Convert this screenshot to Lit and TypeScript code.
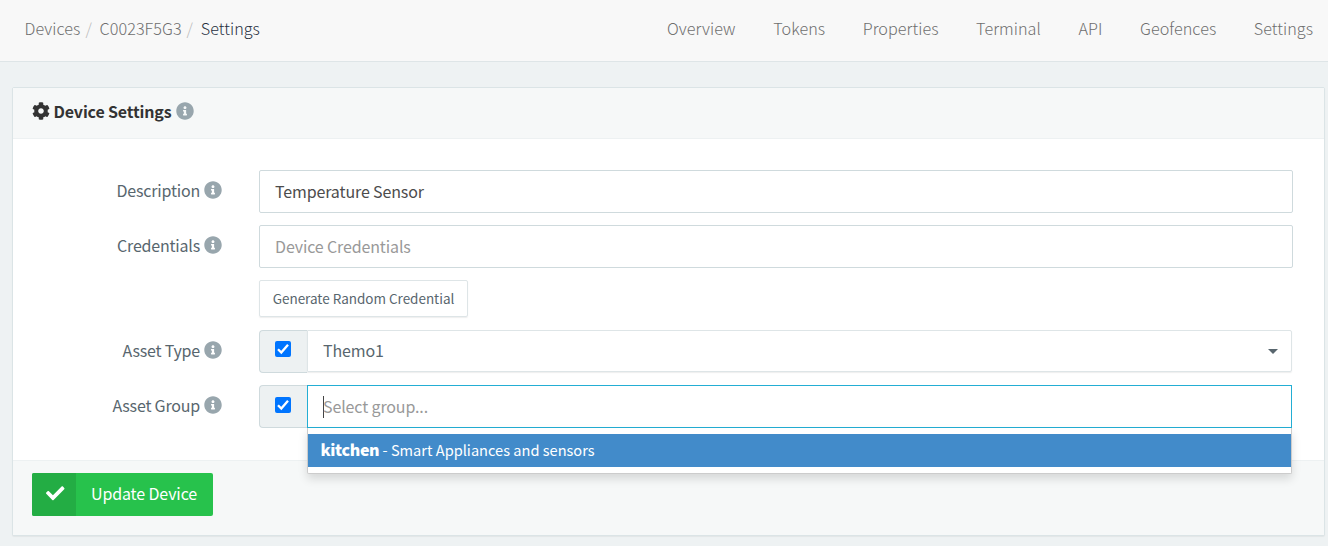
import { LitElement, html, css, svg } from "lit";
import { customElement } from "lit/decorators.js";

const ICONS: Record<string, string> = {
  cog: "M487.4 315.7l-42.6-24.6c4.3-23.2 4.3-47 0-70.2l42.6-24.6c4.9-2.8 7.1-8.6 5.5-14-11.1-35.6-30-67.8-54.7-94.6-3.8-4.1-10-5.1-14.8-2.3L380.8 110c-17.900-15.400-38.500-27.300-60.800-35.100V25.800c0-5.600-3.900-10.500-9.400-11.700-36.700-8.200-74.300-7.800-109.200 0-5.500 1.200-9.400 6.100-9.400 11.700V75c-22.200 7.900-42.800 19.800-60.800 35.100L88.700 85.500c-4.900-2.800-11-1.900-14.8 2.300-24.700 26.700-43.600 58.900-54.700 94.600-1.700 5.400.6 11.200 5.500 14L67.300 221c-4.300 23.200-4.300 47 0 70.200l-42.600 24.600c-4.900 2.800-7.100 8.600-5.500 14 11.100 35.600 30 67.800 54.700 94.600 3.800 4.100 10 5.100 14.800 2.300l42.600-24.600c17.900 15.400 38.500 27.300 60.800 35.100v49.200c0 5.600 3.900 10.500 9.400 11.700 36.700 8.200 74.300 7.800 109.200 0 5.500-1.200 9.400-6.100 9.400-11.700v-49.200c22.200-7.900 42.800-19.800 60.800-35.100l42.600 24.600c4.900 2.800 11 1.900 14.800-2.300 24.700-26.700 43.600-58.900 54.700-94.600 1.500-5.500-.7-11.300-5.600-14.100zM256 336c-44.100 0-80-35.900-80-80s35.900-80 80-80 80 35.900 80 80-35.900 80-80 80z",
  info: "M256 8C119.043 8 8 119.083 8 256c0 136.997 111.043 248 248 248s248-111.003 248-248C504 119.083 392.957 8 256 8zm0 110c23.196 0 42 18.804 42 42s-18.804 42-42 42-42-18.804-42-42 18.804-42 42-42zm56 254c0 6.627-5.373 12-12 12h-88c-6.627 0-12-5.373-12-12v-24c0-6.627 5.373-12 12-12h12v-64h-12c-6.627 0-12-5.373-12-12v-24c0-6.627 5.373-12 12-12h64c6.627 0 12 5.373 12 12v100h12c6.627 0 12 5.373 12 12v24z",
  check: "M173.898 439.404l-166.400-166.400c-9.997-9.997-9.997-26.206 0-36.204l36.203-36.204c9.997-9.998 26.207-9.998 36.204 0L192 312.690 432.095 72.596c9.997-9.997 26.207-9.997 36.204 0l36.203 36.204c9.997 9.997 9.997 26.206 0 36.204l-294.400 294.401c-9.998 9.997-26.207 9.997-36.204-.001z",
};

const icon = (name: string) =>
  html`<svg class="icon ${name}" viewBox="0 0 512 512">${svg`<path d=${ICONS[name]} />`}</svg>`;

const NAV = ["Overview", "Tokens", "Properties", "Terminal", "API", "Geofences", "Settings"];

@customElement("app-root")
export class AppRoot extends LitElement {
  static styles = css`
    :host {
      display: block;
      height: 546px;
      overflow: hidden;
      background: #eef2f3;
      color: #58666e;
      font: 400 16px/24px "Noto Sans CJK SC", "Noto Sans", sans-serif;
      letter-spacing: -0.13px;
    }
    * { box-sizing: border-box; }
    .icon { display: block; fill: currentColor; flex: none; }
    header {
      display: flex;
      justify-content: space-between;
      height: 62px;
      padding: 16px 15px 0 24.5px;
      background: #f8f8f8;
      border-bottom: 1px solid #dee5e7;
      color: #6e6e6e;
      font-size: 16.2px;
      font-weight: 300;
      letter-spacing: 0.04px;
    }
    .crumbs { display: flex; }
    .slash { color: #bbb; padding: 0 7.8px 0 5px; }
    .current { color: #262f40; }
    nav { display: flex; gap: 37.6px; }
    .panel {
      width: 1313px;
      height: 449px;
      margin: 25px 0 0 12px;
      background: #fff;
      border: 1px solid #dbe4e6;
      border-radius: 2px;
      box-shadow: 0 1px 1px rgba(0, 0, 0, 0.05);
      display: flex;
      flex-direction: column;
    }
    .heading {
      display: flex;
      align-items: flex-start;
      height: 51px;
      padding: 11px 0 0 19px;
      background: #f6f8f8;
      border-bottom: 1px solid #edf1f2;
      color: #333;
      font-weight: 700;
      letter-spacing: -0.16px;
    }
    .heading .icon { margin-top: 3px; }
    .cog { width: 18px; height: 18px; margin-right: 3.5px; }
    .info { width: 18px; height: 18px; margin-left: 4px; color: #98a6ad; }
    .form {
      flex: 1;
      padding: 31px 31px 0 0;
      display: flex;
      flex-direction: column;
      gap: 12px;
    }
    .row { display: grid; grid-template-columns: 209px 1fr; column-gap: 37px; }
    .label { display: flex; justify-content: flex-end; height: 42px; padding-top: 8px; letter-spacing: -0.2px; }
    .label .info { margin-top: 3px; }
    .field {
      height: 43px;
      padding: 8px 15px;
      border: 1px solid #cfdadd;
      border-radius: 2px;
      color: #4c4c4c;
    }
    .field.muted, .muted { color: #999; }
    .generate {
      justify-self: start;
      grid-column: 2;
      height: 37px;
      width: 209px;
      margin-bottom: 1px;
      font-size: 13.5px;
      letter-spacing: -0.02px;
      text-align: center;
      padding-top: 5px;
      border: 1px solid #dee5e7;
      border-radius: 2px;
      box-shadow: 0 1px 1px rgba(90, 90, 90, 0.1);
    }
    .group { display: flex; height: 43px; padding-right: 1px; position: relative; }
    .addon {
      width: 48px;
      padding: 10px 0 0 15px;
      background: #edf1f2;
      border: 1px solid #cfdadd;
      border-right: 0;
      border-radius: 4px 0 0 4px;
    }
    .low { padding-top: 11px; }
    .box { display: block; width: 16px; height: 16px; }
    .select {
      flex: 1;
      display: flex;
      justify-content: space-between;
      height: 42px;
      padding: 7px 13px 0 15px;
      border: 1px solid #dee5e7;
      border-radius: 0 2px 2px 0;
      box-shadow: 0 1px 1px rgba(90, 90, 90, 0.1);
    }
    .caret {
      margin-top: 11px;
      width: 10px;
      height: 5px;
      background: #58666e;
      clip-path: polygon(0 0, 100% 0, 50% 100%);
    }
    .active { flex: 1; display: flex; height: 43px; padding: 8px 15px; border: 1px solid #23aed4; background: #fff; }
    .cursor { width: 1px; height: 22px; margin: 2px -1px 0 0; background: #444; }
    .menu {
      position: absolute;
      top: 43px;
      left: 48px;
      right: 1px;
      height: 46px;
      padding: 6px 0;
      background: #fff;
      border: 1px solid #ccc;
      border-top: 0;
      border-radius: 0 0 2px 2px;
      box-shadow: 0 5px 10px rgba(0, 0, 0, 0.13);
    }
    .option {
      height: 33px;
      padding: 3px 12.5px;
      background: #428bca;
      color: #fff;
      font-size: 14.6px;
      letter-spacing: 0;
      white-space: pre;
    }
    .option b { font-size: 16px; font-weight: 900; letter-spacing: -0.35px; }
    .footer { height: 75px; padding: 12px 19px; background: #f6f8f8; border-top: 1px solid #edf1f2; }
    .update {
      display: flex;
      width: 181px;
      height: 43px;
      border-radius: 2px;
      overflow: hidden;
      background: #27c24c;
      color: #fff;
    }
    .mark { width: 44px; background: #23ad44; padding: 11px 0 0 14px; }
    .check { width: 18.5px; height: 18.5px; }
    .caption { padding: 8px 0 0 15px; }
  `;

  private label(text: string) {
    return html`<div class="label"><span>${text}</span>${icon("info")}</div>`;
  }

  render() {
    return html`
      <header>
        <div class="crumbs">
          <span>Devices</span><span class="slash">/</span><span>C0023F5G3</span><span class="slash">/</span><span class="current">Settings</span>
        </div>
        <nav>${NAV.map((n) => html`<span>${n}</span>`)}</nav>
      </header>
      <section class="panel">
        <div class="heading">${icon("cog")}<span>Device Settings</span>${icon("info")}</div>
        <div class="form">
          <div class="row">${this.label("Description")}<div class="field">Temperature Sensor</div></div>
          <div class="row">${this.label("Credentials")}<div class="field muted">Device Credentials</div></div>
          <div class="row"><div class="generate">Generate Random Credential</div></div>
          <div class="row">
            ${this.label("Asset Type")}
            <div class="group">
              <div class="addon">
                ${this.box()}
              </div>
              <div class="select"><span>Themo1</span><span class="caret"></span></div>
            </div>
          </div>
          <div class="row">
            ${this.label("Asset Group")}
            <div class="group">
              <div class="addon low">${this.box()}</div>
              <div class="active muted"><span class="cursor"></span><span>Select group...</span></div>
              <div class="menu"><div class="option"><b>kitchen</b> - Smart Appliances and sensors</div></div>
            </div>
          </div>
        </div>
        <div class="footer">
          <div class="update"><div class="mark">${icon("check")}</div><span class="caption">Update Device</span></div>
        </div>
      </section>
    `;
  }

  private box() {
    return html`<svg class="box" viewBox="0 0 16 16">
      <rect width="16" height="16" rx="2" fill="#0075ff" />
      <path d="M3 8.300L6.300 11.600L13 3.700" fill="none" stroke="#fff" stroke-width="2.300" />
    </svg>`;
  }
}
